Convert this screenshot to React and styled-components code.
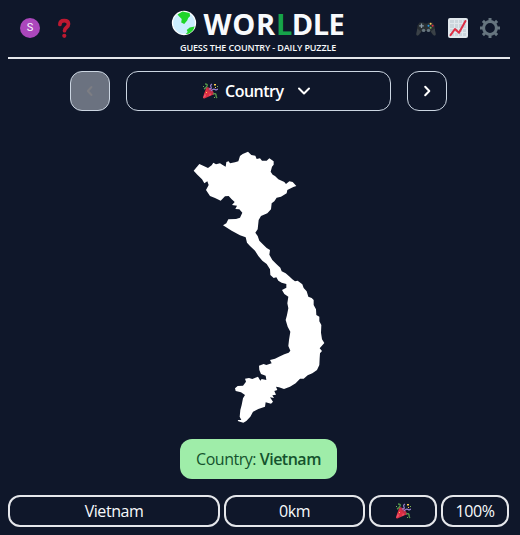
import React from "react";
import styled, { createGlobalStyle } from "styled-components";

const GlobalStyle = createGlobalStyle`
  * { box-sizing: border-box; }
  body {
    margin: 0;
    background: #0f172a;
    color: #f8fafc;
    font-family: "Open Sans", "Noto Sans", sans-serif;
    overflow: hidden;
  }
`;

const Page = styled.div`
  width: 520px;
  height: 535px;
  padding: 0 10px 0 8px;
  display: flex;
  flex-direction: column;
`;

const Header = styled.header`
  height: 59px;
  border-bottom: 2px solid #e5e7eb;
  display: grid;
  grid-template-columns: 100px 1fr 100px;
`;

const HeaderIcons = styled.div`
  display: flex;
  align-items: center;
  justify-content: ${(p) => (p.$end ? "flex-end" : "flex-start")};
  gap: 12px;
  padding: ${(p) => (p.$end ? "0 10px 1px 0" : "0 0 1px 12px")};
`;

const Avatar = styled.div`
  width: 20px;
  height: 20px;
  border-radius: 50%;
  background: #ab47bc;
  display: flex;
  align-items: center;
  justify-content: center;
  font: 400 11px/20px Roboto, sans-serif;
`;

const Brand = styled.div`
  display: flex;
  flex-direction: column;
  align-items: center;
`;

const Title = styled.h1`
  margin: 5px 0 0 -2px;
  height: 38px;
  display: flex;
  align-items: center;
  gap: 7px;
  font-size: 29px;
  line-height: 38px;
  font-weight: 700;
  white-space: nowrap;
`;

const GlobeIcon = styled.svg`
  margin-top: -3px;
`;

const Word = styled.span`
  width: 142px;
  letter-spacing: -0.5px;
`;

const WordStart = styled.span`
  letter-spacing: 0.7px;
`;

const Accent = styled.span`
  color: #16a34a;
`;

const Tagline = styled.div`
  width: 158px;
  font-size: 9px;
  line-height: 10px;
  font-weight: 600;
  white-space: nowrap;
  letter-spacing: -0.13px;
`;

const Navigation = styled.nav`
  margin-top: 12px;
  height: 40px;
  display: flex;
  justify-content: center;
  gap: 16px;
  padding-right: 1px;
`;

const NavButton = styled.button`
  width: ${(p) => p.$width || "40px"};
  height: 40px;
  padding: ${(p) => (p.$width ? "0 3px 0 0" : "0")};
  border: 1px solid #cbd5e1;
  border-radius: 12px;
  background: ${(p) => (p.disabled ? "#6b7280" : "transparent")};
  color: ${(p) => (p.disabled ? "#7c7d83" : "#fff")};
  display: flex;
  align-items: center;
  justify-content: center;
  font: 600 16px/24px "Open Sans", sans-serif;
`;

const NavLabel = styled.span`
  width: 59px;
  margin: 0 12px 0 7px;
  letter-spacing: -0.5px;
  text-align: left;
`;

const MapArea = styled.main`
  height: 328px;
  padding: 29px 0 0 172px;
`;

const AnswerRow = styled.div`
  display: flex;
  justify-content: center;
  padding-right: 1px;
`;

const Answer = styled.div`
  width: 157px;
  height: 40px;
  border-radius: 12px;
  background: #9feda9;
  color: #14532d;
  font-size: 16px;
  line-height: 41px;
  text-align: center;
  white-space: nowrap;
  letter-spacing: -0.48px;
`;

const Strong = styled.span`
  font-weight: 600;
  letter-spacing: -0.5px;
`;

const Results = styled.div`
  margin-top: 16px;
  display: grid;
  grid-template-columns: 212px 141px 68px 68px;
  gap: 4px;
`;

const Result = styled.div`
  height: 32px;
  border: 2px solid #e5e7eb;
  border-radius: 12px;
  display: flex;
  align-items: center;
  justify-content: center;
  font-size: 16px;
  line-height: 28px;
  letter-spacing: -0.45px;
`;

const Chevron = ({ d }) => (
  <svg width="16" height="16" viewBox="0 0 16 16" fill="none" stroke="currentColor" strokeWidth="2" strokeLinecap="round" strokeLinejoin="round"><path d={d} /></svg>
);

const Party = () => (
  <svg width="16" height="16" viewBox="0 0 16 16">
    <path d="M4.5 4 1 14q0 2 2 1.3L12.5 11Z" fill="#dd2e44" />
    <path d="M5 4q5 1 7.5 7-2 1-5-2T5 4Z" fill="#be3148" />
    <path d="m3 10 1 3-3 2.5ZM8 10l1 2-2 1Z" fill="#ea596e" />
    <path d="M3 1q3 0 2 2T2 6M11 11q3-1 3 1t1 3" fill="none" stroke="#55964b" strokeWidth="1.4" />
    <path d="M7 6q3 0 2-2t1-3M9 8q2-3 5-1l2-1" fill="none" stroke="#9b80cf" strokeWidth="1.2" />
    <path d="M12 1h2v1.5h-2zM13 4h1v1h-1zM4 9h1v1H4z" fill="#ffcc4d" />
    <path d="M1 3h1v1H1zM15 3h1v1h-1zM12 14h1v1h-1z" fill="#77b255" />
  </svg>
);

const Question = () => (
  <svg width="24" height="20" viewBox="0 0 24 20">
    <path d="M7.9 6.4C7.9 3.8 9.7 2.6 12.2 2.6c2.6 0 4.3 1.3 4.3 3.4 0 3.5-4 3.4-4 6.7" fill="none" stroke="#be1931" strokeWidth="3.7" strokeLinecap="round" />
    <circle cx="12.3" cy="17.8" r="2.1" fill="#be1931" />
  </svg>
);

const Globe = () => (
  <GlobeIcon width="26" height="26" viewBox="0 0 26 26">
    <circle cx="13" cy="13" r="11.5" fill="#cceeff" stroke="#fff" strokeWidth="1.3" />
    <path d="m6.5 4.5 5-3 7 1.5.7 3-2 2-1 2.5-3 3.5-3-1.5.5-3.5-2-2Z" fill="#20d52a" />
    <path d="M23.7 16.5q-1 4-4 6-2.5 1.8-5 1.5l2-2-1-2 3-2.5Z" fill="#20d52a" />
  </GlobeIcon>
);

const Gamepad = () => (
  <svg width="20" height="20" viewBox="0 0 20 20">
    <path d="M3.5 4.5h4l1 1h3l1-1h4l2 3 1 9q-1 1.5-2.5.5l-3-4H6l-3 4q-1.5 1-2.5-.5l1-9Z" fill="#292f33" />
    <path d="M1.3 10.5.3 16q0 2.5 2.3 1l2.5-3.5ZM18.7 10.5l1 5.5q0 2.5-2.3 1l-2.5-3.5Z" fill="#3a4147" />
    <path d="M5.5 5.5v4.6M3.2 7.8h4.6" stroke="#8899a6" strokeWidth="1.3" />
    <circle cx="7.6" cy="12.4" r="1.7" fill="#66757f" /><circle cx="12.5" cy="12.4" r="1.7" fill="#66757f" />
    <circle cx="14.6" cy="5.8" r="1" fill="#fdcb58" /><circle cx="12.5" cy="7.8" r="1" fill="#269ae9" /><circle cx="16.6" cy="7.8" r="1" fill="#dd2e44" /><circle cx="14.6" cy="9.8" r="1" fill="#78b159" />
  </svg>
);

const Chart = () => (
  <svg width="20" height="20" viewBox="0 0 20 20">
    <rect width="20" height="20" rx="2" fill="#e1e8ed" />
    <path d="M2 2h4v3H2zm5 0h3v3H7zm4 0h3v3h-3zm4 0h3v3h-3zM2 6h4v4H2zm5 0h3v4H7zm4 0h3v4h-3zm4 0h3v4h-3zM2 11h4v3H2zm5 0h3v3H7zm4 0h3v3h-3zm4 0h3v3h-3zM2 15h4v3H2zm5 0h3v3H7zm4 0h3v3h-3zm4 0h3v3h-3z" fill="#ccd6dd" />
    <path d="M2.5 17.2 7 11l4 3.7L17.5 3" fill="none" stroke="#dd2e44" strokeWidth="2" strokeLinecap="round" strokeLinejoin="round" />
  </svg>
);

const Gear = () => (
  <svg width="20" height="20" viewBox="0 0 20 20" fill="none" stroke="#66757f">
    <circle cx="10" cy="10" r="6.4" strokeWidth="3" />
    <path d="M10 0v3M10 17v3M0 10h3M17 10h3M2.9 2.9 5 5M15 15l2.1 2.1M2.9 17.1 5 15M15 5l2.1-2.1" strokeWidth="3" />
  </svg>
);

const CountryShape = () => (
  <svg width="150" height="290" viewBox="0 0 450 870" fill="#fff">
    <path d="M41 92 58 72 76 80 84 84 95 76 100 68 108 73 120 70 128 75 137 80 139 66 146 64 150 70 165 67 175 64 180 48 188 42 204 35 214 45 226 47 230 57 240 55 246 62 260 62 268 55 281 64 281 74 276 80 272 95 278 104 285 108 295 118 313 126 318 132 328 124 338 126 349 138 340 141 322 150 320 160 303 170 290 173 283 184 275 190 273 208 262 220 243 228 236 240 233 268 226 278 233 288 238 302 250 314 260 324 270 330 268 344 277 360 289 372 301 383 305 394 317 400 329 410 337 418 345 424 353 422 367 433 371 444 380 454 385 470 395 474 401 480 401 495 408 508 409 525 418 530 418 544 424 555 423 578 426 598 433 609 425 618 419 625 426 633 420 640 419 655 418 675 411 690 397 700 383 706 371 716 360 716 347 730 330 740 312 747 297 742 288 740 292 750 283 753 288 764 277 766 282 774 270 772 279 785 273 791 257 787 255 800 235 807 219 815 211 830 199 843 190 848 175 844 173 840 184 840 179 830 181 810 185 795 189 775 195 765 183 757 167 753 165 745 173 738 189 737 198 725 195 716 207 714 217 717 234 710 241 722 245 717 259 720 257 707 243 702 238 690 237 677 251 672 259 675 275 670 270 660 285 656 297 650 313 643 326 638 331 632 325 618 327 600 331 575 323 560 317 540 321 525 325 505 322 490 325 470 313 462 306 450 319 443 319 432 305 428 295 422 289 412 281 414 271 405 270 388 260 372 247 362 235 348 225 332 210 318 201 308 197 292 180 286 155 272 129 256 139 250 145 238 168 237 180 233 187 218 178 208 166 207 171 197 156 195 164 186 155 178 146 168 135 169 122 182 105 174 90 168 78 150 86 135 82 124 73 130 66 118 52 104Z" />
  </svg>
);

export default function App() {
  return (
    <Page>
      <GlobalStyle />
      <Header>
        <HeaderIcons><Avatar>S</Avatar><Question /></HeaderIcons>
        <Brand>
          <Title><Globe /><Word><WordStart>WOR</WordStart><Accent>L</Accent>DLE</Word></Title>
          <Tagline>GUESS THE COUNTRY - DAILY PUZZLE</Tagline>
        </Brand>
        <HeaderIcons $end><Gamepad /><Chart /><Gear /></HeaderIcons>
      </Header>
      <Navigation>
        <NavButton disabled aria-label="Previous"><Chevron d="M9.5 4 5.8 8l3.7 4" /></NavButton>
        <NavButton $width="265px"><Party /><NavLabel>Country</NavLabel><Chevron d="m3 5.5 5 5 5-5" /></NavButton>
        <NavButton aria-label="Next"><Chevron d="m6.2 3.8 4.1 4.2-4.1 4.2" /></NavButton>
      </Navigation>
      <MapArea><CountryShape /></MapArea>
      <AnswerRow><Answer>Country: <Strong>Vietnam</Strong></Answer></AnswerRow>
      <Results>
        <Result>Vietnam</Result><Result>0km</Result><Result><Party /></Result><Result>100%</Result>
      </Results>
    </Page>
  );
}
